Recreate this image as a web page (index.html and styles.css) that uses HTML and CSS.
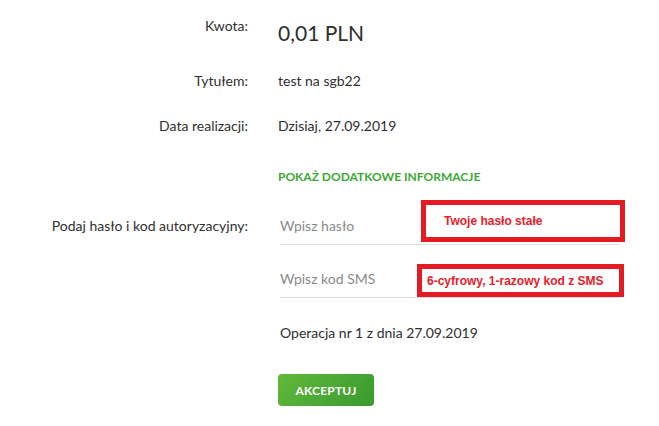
FILE: index.html
```html
<!DOCTYPE html>
<html lang="pl">
<head>
<meta charset="utf-8">
<title>Autoryzacja</title>
<link rel="stylesheet" href="styles.css">
</head>
<body>
<div class="form">
  <div class="row row-amount">
    <div class="label">Kwota:</div>
    <div class="value amount">0,01 PLN</div>
  </div>
  <div class="row row-title">
    <div class="label">Tytułem:</div>
    <div class="value">test na sgb22</div>
  </div>
  <div class="row row-date">
    <div class="label">Data realizacji:</div>
    <div class="value">Dzisiaj, 27.09.2019</div>
  </div>
  <div class="row row-more">
    <div class="label"></div>
    <div class="value"><span class="more">POKAŻ DODATKOWE INFORMACJE</span></div>
  </div>
  <div class="row row-pass">
    <div class="label label-field">Podaj hasło i kod autoryzacyjny:</div>
    <div class="value">
      <div class="field">
        <span class="placeholder">Wpisz hasło</span>
        <div class="hint hint-pass"><span>Twoje hasło stałe</span></div>
      </div>
    </div>
  </div>
  <div class="row row-sms">
    <div class="label"></div>
    <div class="value">
      <div class="field">
        <span class="placeholder">Wpisz kod SMS</span>
        <div class="hint hint-sms"><span>6-cyfrowy, 1-razowy kod z SMS</span></div>
      </div>
    </div>
  </div>
  <div class="row row-op">
    <div class="label"></div>
    <div class="value op">Operacja nr 1 z dnia 27.09.2019</div>
  </div>
  <div class="row row-btn">
    <div class="label"></div>
    <div class="value"><button class="btn" type="button">AKCEPTUJ</button></div>
  </div>
</div>
</body>
</html>
```
FILE: styles.css
```css
* { box-sizing: border-box; }
html, body { margin: 0; padding: 0; background: #fff; }
body {
  font-family: Lato, "Open Sans", "Liberation Sans", sans-serif;
  font-size: 14px;
  line-height: 20px;
  color: #2f2f2f;
}
.form { padding-top: 16px; }
.row {
  display: grid;
  grid-template-columns: 248px 1fr;
  column-gap: 30px;
  align-items: start;
}
.label { text-align: right; white-space: nowrap; }
.value { white-space: nowrap; }
.amount { font-size: 21px; line-height: 30px; padding-top: 2px; }
.row-title { margin-top: 23px; }
.row-date { margin-top: 25px; }
.row-more { margin-top: 32px; }
.more {
  font-size: 12px;
  line-height: 17px;
  font-weight: 700;
  color: #3aa935;
  display: block;
}
.row-pass { margin-top: 20px; }
.label-field { padding-top: 11px; }
.row-sms { margin-top: 13px; }
.field {
  position: relative;
  margin-left: 2px;
  width: 340px;
  padding: 11px 0 8px;
  border-bottom: 1px solid #dedede;
}
.placeholder { color: #8a8a8a; }
.hint {
  position: absolute;
  border: 5px solid #e51b24;
  background: #fff;
  display: flex;
  align-items: center;
  font-family: "Liberation Sans", Arial, sans-serif;
  font-weight: 700;
  font-size: 12px;
  line-height: 14px;
  color: #e8202a;
}
.hint-pass { left: 141px; top: -5px; width: 204px; height: 42px; padding-left: 18px; }
.hint-sms { left: 137px; top: 6px; width: 207px; height: 33px; padding-left: 5px; }
.row-op { margin-top: 25px; }
.op { padding-left: 2px; }
.row-btn { margin-top: 31px; }
.btn {
  width: 96px;
  height: 32px;
  border: 0;
  border-radius: 4px;
  background: linear-gradient(135deg, #63b83b 0%, #4aa834 55%, #389b2e 100%);
  color: #fff;
  font-family: Lato, "Open Sans", sans-serif;
  font-weight: 700;
  font-size: 12px;
  letter-spacing: 0.2px;
  padding: 0;
  cursor: pointer;
}
```
